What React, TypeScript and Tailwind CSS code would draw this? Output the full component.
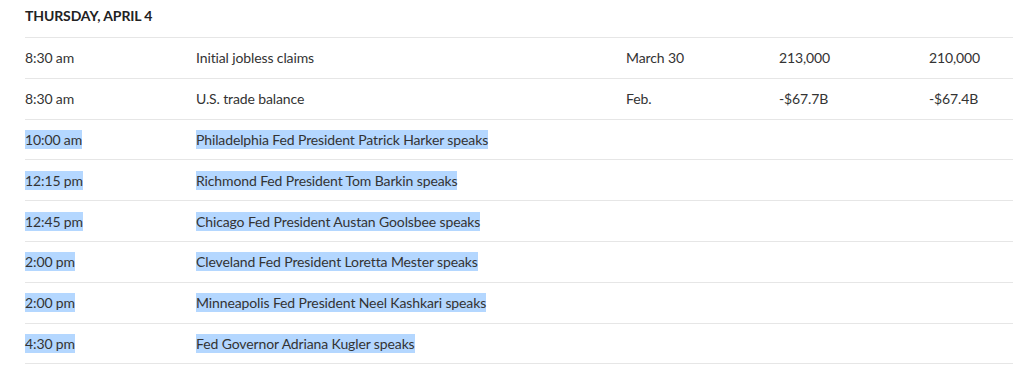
import React from "react";

type Row = { time: string; event: string; period?: string; a?: string; b?: string; sel?: boolean };

const rows: Row[] = [
  { time: "8:30 am", event: "Initial jobless claims", period: "March 30", a: "213,000", b: "210,000" },
  { time: "8:30 am", event: "U.S. trade balance", period: "Feb.", a: "-$67.7B", b: "-$67.4B" },
  { time: "10:00 am", event: "Philadelphia Fed President Patrick Harker speaks", sel: true },
  { time: "12:15 pm", event: "Richmond Fed President Tom Barkin speaks", sel: true },
  { time: "12:45 pm", event: "Chicago Fed President Austan Goolsbee speaks", sel: true },
  { time: "2:00 pm", event: "Cleveland Fed President Loretta Mester speaks", sel: true },
  { time: "2:00 pm", event: "Minneapolis Fed President Neel Kashkari speaks", sel: true },
  { time: "4:30 pm", event: "Fed Governor Adriana Kugler speaks", sel: true },
];

function Cell({ text, sel }: { text?: string; sel?: boolean }) {
  if (!text) return <div />;
  return (
    <div className="flex items-center">
      <span className={"inline-block leading-[19px] " + (sel ? "bg-[#b4d7ff]" : "")}>{text}</span>
    </div>
  );
}

export default function App() {
  return (
    <div
      className="w-[1022px] h-[372px] bg-white pl-[25px] pr-[9px] text-[#333333] text-[14px] tracking-[-0.12px]"
      style={{ fontFamily: "Lato, 'Open Sans', sans-serif" }}
    >
      <div className="h-[37px] pt-[7px] font-bold text-[14px] leading-[18px] text-[#222222]">
        THURSDAY, APRIL 4
      </div>
      {rows.map((r, i) => (
        <div
          key={i}
          className="grid grid-cols-[171px_430px_153px_150px_1fr] h-[40.8px] border-t border-[#e6e6e6]"
        >
          <Cell text={r.time} sel={r.sel} />
          <Cell text={r.event} sel={r.sel} />
          <Cell text={r.period} />
          <Cell text={r.a} />
          <Cell text={r.b} />
        </div>
      ))}
      <div className="border-t border-[#e6e6e6]" />
    </div>
  );
}
